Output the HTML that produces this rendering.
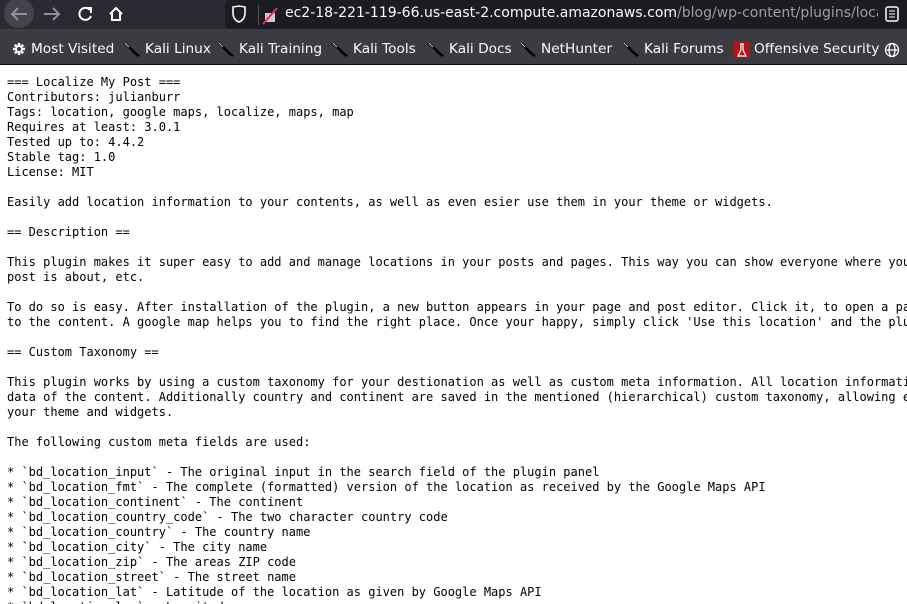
<!DOCTYPE html>
<html><head><meta charset="utf-8"><style>
*{box-sizing:border-box}
html,body{margin:0;width:907px;height:604px;overflow:hidden;background:#fff;font-family:"Liberation Sans","DejaVu Sans",sans-serif}
.wrap{position:relative;width:907px;height:604px;overflow:hidden}
.top{position:absolute;left:0;top:0;width:907px;height:29px;background:#2b2a33}
.bm{position:absolute;left:0;top:29px;width:907px;height:36px;background:#3b3b42;border-bottom:1px solid #0c0c0d}
.url{position:absolute;left:225px;top:0;width:682px;height:29px;background:#1c1b22;border-radius:4px 0 0 4px}
.urlclip{position:absolute;left:285px;top:5px;width:593px;height:22px;overflow:hidden}
.urltext{font-size:14px;color:#fbfbfe;white-space:nowrap;font-family:"DejaVu Sans",sans-serif;letter-spacing:0}
.urltext span{color:#9d9da4}
.bmi{position:absolute;top:41px;font-size:13.7px;color:#fbfbfe;white-space:nowrap;font-family:"DejaVu Sans",sans-serif}
.k{position:absolute;top:41px}
pre{position:absolute;left:7px;top:75px;margin:0;font-family:"DejaVu Sans Mono","Liberation Mono",monospace;font-size:12px;line-height:15px;color:#000;white-space:pre;width:900px;overflow:hidden}
.ic{position:absolute}
</style></head><body><div class="wrap">
<div class="top"></div>
<div style="position:absolute;left:4px;top:-2px;width:30px;height:30px;border-radius:50%;background:#45444c"></div>
<svg class="ic" style="left:0;top:0" width="220" height="29" viewBox="0 0 220 29">
<g fill="none" stroke="#8f8f9d" stroke-width="2"><path d="M27 14H12M18 8l-6 6 6 6"/><path d="M44 14h15M53 8l6 6-6 6"/></g>
<g fill="none" stroke="#fbfbfe" stroke-width="2"><path d="M90 10a6 6 0 1 0 1 6"/><path d="M86 8h5v5" /><path d="M110 14l6-6 6 6M112 13v7h8v-7"/></g>
</svg>
<div class="url"></div>
<svg class="ic" style="left:230px;top:5px" width="50" height="20"><path d="M3 2l6-1 6 1v6c0 5-3 8-6 9-3-1-6-4-6-9z" fill="none" stroke="#fbfbfe" stroke-width="1.6"/><rect x="28" y="0" width="1" height="20" fill="#555"/><rect x="35" y="8" width="10" height="9" fill="#ccc"/><path d="M33 19L47 3" stroke="#e22850" stroke-width="2"/></svg>
<div class="urlclip"><div class="urltext">ec2-18-221-119-66.us-east-2.compute.amazonaws.com<span>/blog/wp-content/plugins/loca</span></div></div>
<svg class="ic" style="left:885px;top:6px" width="16" height="16"><rect x="1" y="1" width="12" height="14" rx="2" fill="none" stroke="#fbfbfe" stroke-width="1.5"/><path d="M4 5h6M4 8h6M4 11h6" stroke="#fbfbfe"/></svg>
<div class="bm"></div>
<svg class="ic" style="left:12px;top:42px" width="14" height="14"><g stroke="#fbfbfe" stroke-width="2.5"><path d="M7 1v12M1 7h12M2.8 2.8l8.4 8.4M11.2 2.8l-8.4 8.4"/></g><circle cx="7" cy="7" r="2" fill="#3b3b42"/></svg>
<div class="bmi" style="left:31px">Most Visited</div>
<svg class="k" style="left:124px" width="16" height="16"><path d="M1 2l4 4 3 3 3 3 4 3" stroke="#000" stroke-width="2.5" fill="none"/><path d="M1 2l4 4" stroke="#ccc" stroke-width="1"/></svg>
<div class="bmi" style="left:145px">Kali Linux</div>
<svg class="k" style="left:218px" width="16" height="16"><path d="M1 2l4 4 3 3 3 3 4 3" stroke="#000" stroke-width="2.5" fill="none"/><path d="M1 2l4 4" stroke="#ccc" stroke-width="1"/></svg>
<div class="bmi" style="left:239px">Kali Training</div>
<svg class="k" style="left:332px" width="16" height="16"><path d="M1 2l4 4 3 3 3 3 4 3" stroke="#000" stroke-width="2.5" fill="none"/><path d="M1 2l4 4" stroke="#ccc" stroke-width="1"/></svg>
<div class="bmi" style="left:353px">Kali Tools</div>
<svg class="k" style="left:428px" width="16" height="16"><path d="M1 2l4 4 3 3 3 3 4 3" stroke="#000" stroke-width="2.5" fill="none"/><path d="M1 2l4 4" stroke="#ccc" stroke-width="1"/></svg>
<div class="bmi" style="left:449px">Kali Docs</div>
<svg class="k" style="left:520px" width="16" height="16"><path d="M1 2l4 4 3 3 3 3 4 3" stroke="#000" stroke-width="2.5" fill="none"/><path d="M1 2l4 4" stroke="#ccc" stroke-width="1"/></svg>
<div class="bmi" style="left:541px">NetHunter</div>
<svg class="k" style="left:623px" width="16" height="16"><path d="M1 2l4 4 3 3 3 3 4 3" stroke="#000" stroke-width="2.5" fill="none"/><path d="M1 2l4 4" stroke="#ccc" stroke-width="1"/></svg>
<div class="bmi" style="left:644px">Kali Forums</div>
<svg class="k" style="left:734px;top:42px" width="16" height="16"><rect width="16" height="16" fill="#b5121b"/><path d="M6 2h4M7 2v6l-3 6h8l-3-6V2" stroke="#fff" stroke-width="1.2" fill="none"/></svg>
<div class="bmi" style="left:754px">Offensive Security</div>
<svg class="ic" style="left:884px;top:42px" width="16" height="16"><g fill="none" stroke="#fbfbfe" stroke-width="1.3"><circle cx="8" cy="8" r="6.5"/><ellipse cx="8" cy="8" rx="3" ry="6.5"/><path d="M1.5 8h13"/></g></svg>
<pre>=== Localize My Post ===
Contributors: julianburr
Tags: location, google maps, localize, maps, map
Requires at least: 3.0.1
Tested up to: 4.4.2
Stable tag: 1.0
License: MIT

Easily add location information to your contents, as well as even esier use them in your theme or widgets.

== Description ==

This plugin makes it super easy to add and manage locations in your posts and pages. This way you can show everyone where your
post is about, etc.

To do so is easy. After installation of the plugin, a new button appears in your page and post editor. Click it, to open a panel
to the content. A google map helps you to find the right place. Once your happy, simply click 'Use this location' and the plugin

== Custom Taxonomy ==

This plugin works by using a custom taxonomy for your destionation as well as custom meta information. All location information
data of the content. Additionally country and continent are saved in the mentioned (hierarchical) custom taxonomy, allowing easy
your theme and widgets.

The following custom meta fields are used:

* `bd_location_input` - The original input in the search field of the plugin panel
* `bd_location_fmt` - The complete (formatted) version of the location as received by the Google Maps API
* `bd_location_continent` - The continent
* `bd_location_country_code` - The two character country code
* `bd_location_country` - The country name
* `bd_location_city` - The city name
* `bd_location_zip` - The areas ZIP code
* `bd_location_street` - The street name
* `bd_location_lat` - Latitude of the location as given by Google Maps API
* `bd_location_lng` - Longitude</pre>
</div></body></html>
